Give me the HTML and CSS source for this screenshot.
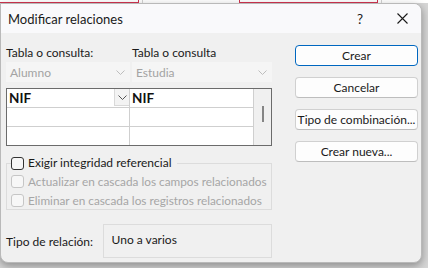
FILE: index.html
```
<!DOCTYPE html>
<html lang="es">
<head>
  <meta charset="UTF-8">
  <title>Modificar relaciones</title>
  <link rel="stylesheet" href="styles.css">
</head>
<body>
  <div class="strip">
    <span class="tab tab-red tab-first"></span>
    <span class="tab tab-gray"></span>
    <span class="tab tab-red tab-second"></span>
    <span class="tab tab-gray"></span>
  </div>

  <div class="dialog">
    <div class="titlebar">
      <span class="title">Modificar relaciones</span>
      <span class="help">?</span>
      <span class="close">
        <svg width="11" height="11" viewBox="0 0 11 11">
          <path d="M0.5 0.5 L10.5 10.5 M10.5 0.5 L0.5 10.5" stroke="#1a1a1a" stroke-width="1.1" fill="none"/>
        </svg>
      </span>
    </div>

    <div class="content">
      <div class="left">
        <div class="tables">
          <span class="label">Tabla o consulta:</span>
          <span class="label">Tabla o consulta</span>
          <div class="combo">Alumno<svg width="9" height="5" viewBox="0 0 9 5"><path d="M0.5 0.5 L4.5 4.5 L8.5 0.5" stroke="#bdbdbd" fill="none"/></svg></div>
          <div class="combo">Estudia<svg width="9" height="5" viewBox="0 0 9 5"><path d="M0.5 0.5 L4.5 4.5 L8.5 0.5" stroke="#bdbdbd" fill="none"/></svg></div>
        </div>

        <div class="grid">
          <div class="rows">
            <div class="row">
              <div class="cell cell-first">NIF<span class="dropbtn"><svg width="9" height="5" viewBox="0 0 9 5"><path d="M0.5 0.5 L4.5 4.5 L8.5 0.5" stroke="#555" fill="none"/></svg></span></div>
              <div class="cell">NIF</div>
            </div>
            <div class="row">
              <div class="cell cell-first"></div>
              <div class="cell"></div>
            </div>
            <div class="row">
              <div class="cell cell-first"></div>
              <div class="cell"></div>
            </div>
          </div>
          <div class="scroll"><span class="thumb"></span></div>
        </div>

        <fieldset class="integrity">
          <legend><span class="check"></span>Exigir integridad referencial</legend>
          <div class="opt disabled"><span class="check"></span>Actualizar en cascada los campos relacionados</div>
          <div class="opt disabled"><span class="check"></span>Eliminar en cascada los registros relacionados</div>
        </fieldset>

        <div class="reltype">
          <span class="label">Tipo de relación:</span>
          <div class="relbox">Uno a varios</div>
        </div>
      </div>

      <div class="buttons">
        <button class="btn btn-default">Crear</button>
        <button class="btn">Cancelar</button>
        <button class="btn">Tipo de combinación...</button>
        <button class="btn">Crear nueva...</button>
      </div>
    </div>
  </div>
</body>
</html>
```

FILE: styles.css
```
body {
  margin: 0;
  background-color: #d6d6d6;
  font-family: Lato, "Liberation Sans", sans-serif;
  font-size: 12px;
  color: #1a1a1a;
  width: 428px;
  height: 268px;
  overflow: hidden;
  white-space: nowrap;
}

/* ventana de fondo */
.strip {
  display: flex;
  height: 3px;
  background-color: #ffffff;
}

.tab {
  display: block;
  height: 3px;
  box-sizing: border-box;
}

.tab-red {
  border-bottom: 1px solid #c4314b;
}

.tab-first {
  width: 139px;
  border-right: 1px solid #c4314b;
}

.tab-gray {
  width: 4px;
  border-right: 1px solid #c8c8c8;
}

.tab-second {
  width: 139px;
  margin-left: 96px;
  border-left: 1px solid #c4314b;
  border-right: 1px solid #c4314b;
}

.dialog {
  width: 422px;
  height: 260px;
  box-sizing: border-box;
  background-color: #f0f0f0;
  border: 1px solid #b9b9b9;
  border-radius: 0 8px 8px 8px;
  box-shadow: 0 3px 8px rgba(0, 0, 0, 0.35);
  overflow: hidden;
}

.titlebar {
  display: flex;
  align-items: center;
  height: 29px;
  background-color: #f9f9fb;
  padding-left: 7px;
}

.title {
  flex: 1;
  font-size: 13px;
}

.help {
  width: 14px;
  font-size: 13.5px;
  margin-right: 26px;
}

.close {
  display: flex;
  margin-right: 13px;
}

.content {
  display: flex;
  padding: 12px 3px 0 5px;
}

.left {
  width: 266px;
}

.tables {
  display: grid;
  grid-template-columns: 124px 1fr;
  column-gap: 2px;
}

.label {
  line-height: 16px;
}

.combo {
  display: flex;
  justify-content: space-between;
  align-items: center;
  height: 20px;
  margin-top: 1px;
  padding: 0 5px 0 4px;
  background-color: #f5f5f5;
  color: #a3a3a3;
}

.grid {
  display: flex;
  margin-top: 6px;
  border: 1px solid #6b6b6b;
  background-color: #ffffff;
}

.rows {
  flex: 1;
}

.row {
  display: grid;
  grid-template-columns: 123px 1fr;
  height: 18px;
  border-bottom: 1px solid #cfcfcf;
}

.row:last-child {
  border-bottom: none;
}

.cell {
  display: flex;
  align-items: center;
  padding-left: 2px;
  font-size: 13.5px;
  font-weight: 700;
  color: #111;
}

.cell-first {
  position: relative;
  border-right: 1px solid #cfcfcf;
}

.dropbtn {
  position: absolute;
  right: 0;
  top: 0;
  width: 15px;
  height: 17px;
  box-sizing: border-box;
  display: flex;
  align-items: center;
  justify-content: center;
  background-color: #f3f3f3;
  border-left: 1px solid #d9d9d9;
  border-bottom: 1px solid #d9d9d9;
}

.scroll {
  width: 17px;
  border-left: 1px solid #cfcfcf;
  background-color: #f0f0f0;
  display: flex;
  justify-content: center;
  padding-top: 17px;
}

.thumb {
  display: block;
  width: 2px;
  height: 16px;
  background-color: #858585;
}

.integrity {
  margin: 10px 0 0 0;
  padding: 2px 4px 4px 4px;
  border: 1px solid #dcdcdc;
  height: 46px;
}

.integrity legend {
  display: flex;
  align-items: center;
  padding: 0 6px 0 0;
  margin-left: 0;
  line-height: 14px;
}

.opt {
  display: flex;
  align-items: center;
  height: 19px;
  font-size: 11.8px;
}

.disabled {
  color: #a6a6a6;
}

.check {
  display: inline-block;
  width: 13px;
  height: 13px;
  box-sizing: border-box;
  border: 1px solid #333;
  border-radius: 3px;
  background-color: #f7f7f7;
  margin-right: 4px;
}

.disabled .check {
  border-color: #c6c6c6;
}

.reltype {
  display: flex;
  align-items: flex-start;
  margin-top: 14px;
}

.reltype .label {
  width: 97px;
  margin-top: 10px;
}

.relbox {
  width: 170px;
  height: 34px;
  box-sizing: border-box;
  border: 1px solid #dcdcdc;
  padding: 7px 8px;
  line-height: 16px;
}

.buttons {
  display: flex;
  flex-direction: column;
  gap: 11px;
  margin-left: 23px;
}

.btn {
  width: 123px;
  height: 21px;
  padding: 0;
  font-family: Lato, "Liberation Sans", sans-serif;
  font-size: 12px;
  color: #1a1a1a;
  background-color: #fdfdfd;
  border: 1px solid #d0d0d0;
  border-bottom-color: #bdbdbd;
  border-radius: 4px;
}

.btn-default {
  border: 1px solid #0067c0;
  box-shadow: inset 0 0 0 1px #ffffff;
}
```
